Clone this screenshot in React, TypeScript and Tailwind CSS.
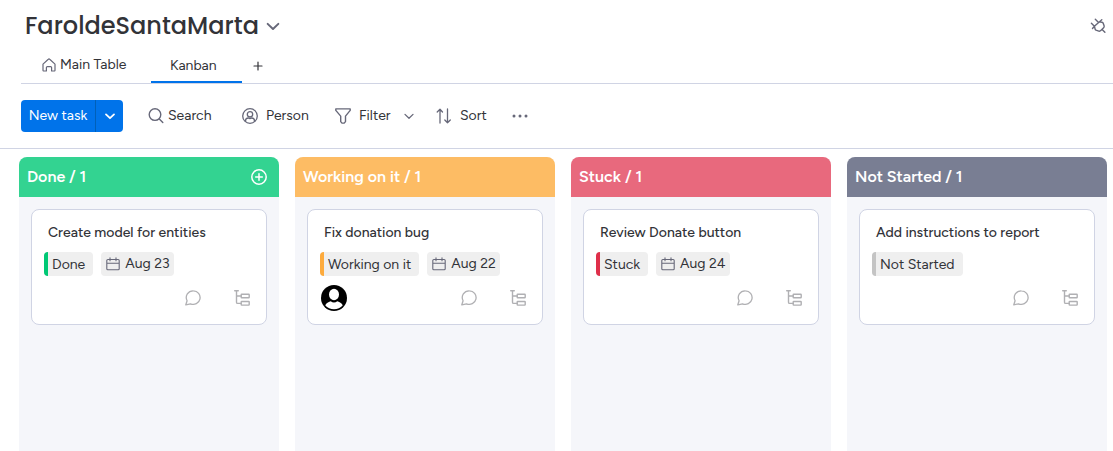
import type { ReactNode } from "react";

type IconProps = { className?: string };

function Svg({ className = "", size = 20, sw = 1.3, children }: IconProps & { size?: number; sw?: number; children: ReactNode }) {
  return (
    <svg
      className={`shrink-0 ${className}`}
      width={size}
      height={size}
      viewBox={`0 0 ${size} ${size}`}
      fill="none"
      stroke="currentColor"
      strokeWidth={sw}
      strokeLinecap="round"
      strokeLinejoin="round"
      aria-hidden="true"
    >
      {children}
    </svg>
  );
}

const Chevron = ({ className, sw = 1.5 }: IconProps & { sw?: number }) => (
  <Svg size={12} sw={sw} className={className}><path d="M2 4.4 6 8.2 10 4.4" /></Svg>
);

const HomeIcon = () => (
  <Svg size={14} sw={1.2} className="text-[#676879]">
    <path d="M1 6.1 6.3 1.3a1 1 0 0 1 1.4 0L13 6.1v6.2a.7.7 0 0 1-.7.7H9.6V9.6a1 1 0 0 0-1-1H5.4a1 1 0 0 0-1 1V13H1.7a.7.7 0 0 1-.7-.7Z" />
  </Svg>
);

const SearchIcon = () => (
  <Svg size={16} sw={1.4}><circle cx="7" cy="6.6" r="5.8" /><path d="m11.3 10.9 3.5 3.6" /></Svg>
);

const PersonIcon = () => (
  <Svg size={16}>
    <circle cx="8" cy="8" r="7.3" />
    <circle cx="8" cy="6.3" r="2.7" />
    <path d="M3.5 13.4V13c0-1.9 1.4-3 2.8-3 .7.4 2.7.4 3.4 0 1.400 0 2.800 1.100 2.800 3v.4" />
  </Svg>
);

const FilterIcon = () => (
  <Svg size={16} sw={1.4}><path d="M.8.9h14.4v1.500l-4.700 5.700v5.500l-1.300 1.500H7l-1.300-1.500V8.100L.8 2.400Z" /></Svg>
);

const SortIcon = () => (
  <Svg size={16}>
    <path d="M4 15V1.200M1.200 4 4 1.200 6.500 4M11.500 1v13.800M8.800 12l2.700 2.800 2.800-2.800" />
  </Svg>
);

const PlugIcon = () => (
  <Svg size={16} sw={1.4}>
    <path d="m5.300 1.200 3 3M1.400 5.200l3 3M11.800 1.800 4.400 8.200M9.600 3.700l2.400.6a2 2 0 0 1 1.200.9l.9 2.600a2 2 0 0 1-.5 2l-2.800 2.800a2 2 0 0 1-2 .5L6 12.200a2 2 0 0 1-.9-1.200l-.7-2.800L2.500 10.500M12.100 11.400l2.800 2.900" />
  </Svg>
);

const CalendarIcon = () => (
  <Svg size={14} sw={1.1}>
    <path d="M4 .8v3M10 .8v3M1.800 2.500h10.400a1 1 0 0 1 1 1v8.200a1 1 0 0 1-1 1H1.800a1 1 0 0 1-1-1V3.500a1 1 0 0 1 1-1ZM.8 6.200h12.400" />
  </Svg>
);

const ChatIcon = () => (
  <Svg size={16} sw={1.3}>
    <path d="M8.400.8a6.800 6.800 0 1 1-2.900 13L.8 14.800l1.300-4A6.800 6.800 0 0 1 8.400.8Z" />
  </Svg>
);

const SubitemsIcon = () => (
  <Svg size={16} sw={1.4}>
    <path d="M.7.8h3.600M2.500.8v11.400a1.200 1.200 0 0 0 1.200 1.200h3.500M2.500 6h4.700" />
    <rect x="7.2" y="4.2" width="8" height="3.6" rx=".5" />
    <rect x="7.2" y="11.5" width="8" height="3.6" rx=".5" />
  </Svg>
);

const Avatar = () => (
  <svg width="26" height="26" viewBox="0 0 26 26" role="img" aria-label="Assignee">
    <circle cx="13" cy="13" r="13" fill="#000" />
    <ellipse cx="13" cy="9.5" rx="5" ry="5.7" fill="#fff" />
    <path d="M4.200 20.200c1.600-2.800 3.800-3 5.600-3.900 1.800 1.600 4.600 1.600 6.400 0 1.800.9 4 1.100 5.600 3.900A11.500 11.500 0 0 1 4.200 20.200Z" fill="#fff" />
  </svg>
);

type Column = {
  name: string;
  header: string;
  stripe: string;
  task: string;
  date?: string;
  assigned?: boolean;
  canAdd?: boolean;
};

const columns: Column[] = [
  { name: "Done", header: "bg-[#33d391]", stripe: "bg-[#00c875]", task: "Create model for entities", date: "Aug 23", canAdd: true },
  { name: "Working on it", header: "bg-[#fdbc64]", stripe: "bg-[#fdab3d]", task: "Fix donation bug", date: "Aug 22", assigned: true },
  { name: "Stuck", header: "bg-[#e8697d]", stripe: "bg-[#df2f4a]", task: "Review Donate button", date: "Aug 24" },
  { name: "Not Started", header: "bg-[#797e93]", stripe: "bg-[#c4c4c4]", task: "Add instructions to report" },
];

function Card({ col }: { col: Column }) {
  return (
    <article className="m-3 flex h-29 flex-col rounded-lg border border-[#d0d4e4] bg-white px-3 pt-3">
      <h3 className="px-1 text-sm leading-[22px] font-medium">{col.task}</h3>
      <div className="mt-2 flex gap-2">
        <span className="flex h-6 overflow-hidden rounded bg-[#efefef] pr-2 leading-[26px]">
          <span className={`mr-1 w-1 ${col.stripe}`} />
          {col.name}
        </span>
        {col.date && (
          <span className="flex h-6 items-center gap-[5px] rounded bg-[#efefef] pr-1 pl-[5px] leading-[26px]">
            <span className="text-[#676879]"><CalendarIcon /></span>
            {col.date}
          </span>
        )}
      </div>
      <div className="mt-2 flex h-7 items-center pr-1 pl-px">
        {col.assigned && <Avatar />}
        <div className="ml-auto flex gap-[33px] text-[#b0b0b3]">
          <button type="button" aria-label="Updates"><ChatIcon /></button>
          <button type="button" aria-label="Subitems"><SubitemsIcon /></button>
        </div>
      </div>
    </article>
  );
}

export default function App() {
  return (
    <div className="flex min-h-screen flex-col bg-white font-['Figtree','Inter',sans-serif] text-sm text-[#323338]">
      <header className="pl-[21px]">
        <div className="flex h-12 items-center pt-1 pr-[7px] pl-1">
          <h1 className="font-['Poppins','Inter',sans-serif] text-2xl font-medium">FaroldeSantaMarta</h1>
          <button type="button" aria-label="Board options" className="ml-1.5"><Chevron className="size-4 text-[#676879]" /></button>
          <button type="button" aria-label="Integrations" className="ml-auto text-[#676879]"><PlugIcon /></button>
        </div>
        <nav className="flex h-9 border-b border-[#d0d4e4]">
          <a href="#table" className="flex w-[130px] items-center gap-1 pb-0.5 pl-[21px] whitespace-nowrap"><HomeIcon />Main Table</a>
          <a href="#kanban" className="flex w-[91px] items-center border-b-2 border-[#0073ea] pt-0.5 pl-[19px]" aria-current="page">Kanban</a>
          <button type="button" aria-label="Add view" className="w-8"><Svg size={10} sw={1.2} className="mx-auto"><path d="M5 1v8M1 5h8" /></Svg></button>
        </nav>
      </header>

      <div className="flex h-[65px] items-center border-b border-[#d0d4e4] pl-[21px] whitespace-nowrap">
        <div className="flex h-8 overflow-hidden rounded bg-[#0073ea] text-white">
          <button type="button" className="w-[75px] border-r border-[#0060b9]">New task</button>
          <button type="button" aria-label="More task types" className="w-[27px]"><Chevron className="mx-auto" sw={1.8} /></button>
        </div>
        <div className="ml-[25px] flex items-center leading-[22px] [&_svg]:text-[#676879]">
          <button type="button" className="flex w-[94px] items-center gap-1"><SearchIcon />Search</button>
          <button type="button" className="flex w-[93px] items-center gap-2"><PersonIcon />Person</button>
          <button type="button" className="flex w-[68px] items-center gap-2"><FilterIcon />Filter</button>
          <button type="button" aria-label="Filter options" className="w-[33px]"><Chevron sw={1.3} /></button>
          <button type="button" className="flex w-[76px] items-center gap-2"><SortIcon />Sort</button>
          <button type="button" aria-label="More">
            <svg width="16" height="4" viewBox="0 0 16 4" fill="currentColor">
              <circle cx="2" cy="2" r="1.5" /><circle cx="8" cy="2" r="1.5" /><circle cx="14" cy="2" r="1.5" />
            </svg>
          </button>
        </div>
      </div>

      <main className="grid flex-1 auto-cols-[minmax(260px,1fr)] grid-flow-col gap-4 overflow-x-auto pt-2 pr-1.5 pl-[19px]">
        {columns.map((col) => (
          <section key={col.name} className="rounded-t-lg bg-[#f5f6fa]">
            <div className={`flex h-10 items-center justify-between rounded-t-lg px-2 text-white ${col.header}`}>
              <h2 className="text-base font-semibold">{col.name} / 1</h2>
              {col.canAdd && (
                <button type="button" aria-label="Add task" className="mr-1">
                  <Svg size={16} sw={1.5}><circle cx="8" cy="8" r="7.2" /><path d="M8 4.7v6.6M4.7 8h6.600" /></Svg>
                </button>
              )}
            </div>
            <Card col={col} />
          </section>
        ))}
      </main>
    </div>
  );
}
